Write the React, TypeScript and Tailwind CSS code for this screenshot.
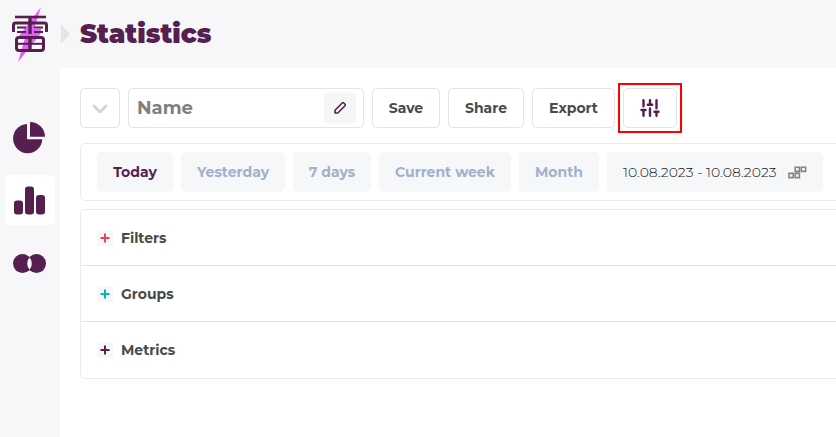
import React from "react";

const periods = [
    { label: "Today", className: "w-19 text-[#551f4f]" },
    { label: "Yesterday", className: "w-26 text-[#a1b0cc]" },
    { label: "7 days", className: "w-[78px] text-[#a1b0cc]" },
    { label: "Current week", className: "w-33 text-[#a1b0cc]" },
    { label: "Month", className: "w-20 text-[#a1b0cc]" },
];

const sections = [
    { label: "Filters", color: "text-[#ea4358]" },
    { label: "Groups", color: "text-[#00b8b8]" },
    { label: "Metrics", color: "text-[#551f4f]" },
];

const outlined = "flex h-10 shrink-0 items-center justify-center rounded-[5px] border border-[#e4e4e4] bg-white";

const Logo: React.FC = () => (
    <svg width="60" height="68" viewBox="0 0 60 68" fill="none" aria-hidden="true">
        <path d="M41 7 19 36v2h6L18 62 41 33v-4h-7Z" fill="#e65cff" />
        <g stroke="#551f4f" strokeWidth="3" strokeLinejoin="round">
            <path d="M15 17h31" strokeWidth="2.600" />
            <path d="M30 17v17" strokeWidth="3.400" />
            <path d="M13.500 32v-7q0-2 2-2h29q2 0 2 2v7" />
            <path d="M17 27.500h9M17 32h9M34 27.500h9M34 32h9" strokeWidth="2" />
            <path d="M19 37.500h22q2.500 0 2.500 2.500v8q0 2.500-2.500 2.500H19q-2.500 0-2.500-2.500v-8q0-2.500 2.500-2.500Z" />
            <path d="M30 38v12" strokeWidth="3.400" />
            <path d="M17 43.800h26" strokeWidth="2" />
        </g>
    </svg>
);

const Sidebar: React.FC = () => (
    <aside className="w-15 shrink-0 bg-[#f7f7fa]">
        <a href="#home" aria-label="Home" className="block h-17">
            <Logo />
        </a>
        <nav className="mt-11 flex flex-col items-center gap-[13px] text-[#551f4f]">
            <a href="#dashboard" aria-label="Dashboard" className="flex size-[50px] items-center justify-center rounded-md">
                <svg width="34" height="34" viewBox="0 0 34 34" fill="currentColor">
                    <path d="M14 4a14.600 14.600 0 1 0 15.300 15.300H14Z" />
                    <path d="M17 2A15 15 0 0 1 32 16.800H17Z" />
                </svg>
            </a>
            <a href="#statistics" aria-label="Statistics" className="flex size-[50px] items-center justify-center rounded-md bg-white">
                <svg width="32" height="30" viewBox="0 0 32 30" fill="currentColor">
                    <rect x="0" y="15.500" width="9" height="14" rx="3" />
                    <rect x="11" y="1.500" width="9" height="28" rx="3" />
                    <rect x="22" y="10" width="9" height="19.500" rx="3" />
                </svg>
            </a>
            <a href="#audiences" aria-label="Audiences" className="flex size-[50px] items-center justify-center rounded-md">
                <svg width="34" height="20" viewBox="0 0 34 20" fill="currentColor">
                    <circle cx="9.500" cy="10.500" r="9.500" />
                    <circle cx="23.500" cy="10.500" r="9.500" />
                    <path d="M16.500 4.500c3 3.500 3 8.500 0 12c-3-3.500-3-8.500 0-12Z" fill="#f7f7fa" />
                </svg>
            </a>
        </nav>
    </aside>
);

const Toolbar: React.FC = () => (
    <div className="flex gap-2 text-sm font-bold text-[#4a4a4a]">
        <button type="button" aria-label="Open report" className={`${outlined} w-10`}>
            <svg width="16" height="10" viewBox="0 0 16 10" fill="none" stroke="#d5d5d5" strokeWidth="3" strokeLinecap="round" strokeLinejoin="round">
                <path d="m2 3 6 6 6-6" />
            </svg>
        </button>
        <div className={`${outlined} w-[236px] pr-[7px] pl-2`}>
            <input
                type="text"
                aria-label="Report name"
                placeholder="Name"
                className="min-w-0 flex-1 text-lg outline-none placeholder:text-[#808080]"
            />
            <button type="button" aria-label="Edit name" className="flex size-8 items-center justify-center rounded-[5px] bg-[#f6f6f7]">
                <svg width="14" height="14" viewBox="0 0 14 14" fill="none" stroke="#551f4f" strokeWidth="1.6" strokeLinejoin="round">
                    <path d="m2 9.200 7.200-7.200q.8-.7 1.600 0l1.200 1.200q.7.800 0 1.600L4.800 12H2Z" />
                </svg>
            </button>
        </div>
        <button type="button" className={`${outlined} w-17`}>Save</button>
        <button type="button" className={`${outlined} w-19`}>Share</button>
        <button type="button" className={`${outlined} w-[83px]`}>Export</button>
        <div className="relative">
            <button type="button" aria-label="Settings" className={`${outlined} w-[54px]`}>
                <svg width="20" height="20" viewBox="0 0 20 20" fill="none" stroke="#551f4f" strokeWidth="2.400" strokeLinecap="round">
                    <path d="M3.500 2.200v6M3.500 12v5.800M1.500 12h4M10 2.200v4.600M7.800 6.800h4.400M10 10.500v7.300M16.500 2.200v8M14.500 13.800h4M16.500 13.800v4" />
                </svg>
            </button>
            <span className="pointer-events-none absolute -inset-[5px] border-2 border-[#ff0000]" />
        </div>
    </div>
);

const PeriodBar: React.FC = () => (
    <div className="mt-[15px] flex gap-2 rounded-l-[5px] border border-r-0 border-[#ebebeb] py-2 pl-4 text-sm font-bold">
        {periods.map((period) => (
            <button key={period.label} type="button" className={`h-10 shrink-0 rounded-[5px] bg-[#f6f7f9] ${period.className}`}>
                {period.label}
            </button>
        ))}
        <button type="button" className="flex h-10 w-54 shrink-0 items-center justify-between rounded-[5px] bg-[#f6f7f9] px-4 font-light text-[#222222]">
            10.08.2023 - 10.08.2023
            <svg width="19" height="13" viewBox="0 0 19 13" fill="none" stroke="#858585" strokeWidth="1.600">
                <path d="M7.200 1.200h4.200v4.200H7.200ZM13.400 1.200h4.200v4.200h-4.200ZM1 7.400h4.200v4.200H1ZM7.200 7.400h4.200v4.200H7.200Z" />
            </svg>
        </button>
    </div>
);

const App: React.FC = () => (
    <div className="flex min-h-screen overflow-hidden bg-white font-['Montserrat','Inter',sans-serif]">
        <Sidebar />
        <div className="min-w-0 flex-1">
            <header className="flex h-17 items-center gap-[10px] bg-[#f7f7fa]">
                <svg width="10" height="20" viewBox="0 0 10 20" fill="#e5e5e5" aria-hidden="true">
                    <path d="M1 0 10 10 1 20Z" />
                </svg>
                <h1 className="text-[26px] leading-8 font-black text-[#551f4f]">Statistics</h1>
            </header>
            <main className="pt-5 pl-5">
                <Toolbar />
                <PeriodBar />
                <div className="mt-2 divide-y divide-[#e4e4e4] rounded-l-[5px] border border-r-0 border-[#ebebeb]">
                    {sections.map((section) => (
                        <button key={section.label} type="button" className="flex h-14 w-full items-center gap-2 pl-4 text-sm font-bold text-[#4a4a4a]">
                            <span className={`flex size-4 items-center justify-center rounded-xs bg-[#f6f7f9] ${section.color}`}>
                                <svg width="10" height="10" viewBox="0 0 10 10" fill="none" stroke="currentColor" strokeWidth="2">
                                    <path d="M5 0.500v9M0.500 5h9" />
                                </svg>
                            </span>
                            {section.label}
                        </button>
                    ))}
                </div>
            </main>
        </div>
    </div>
);

export default App;
